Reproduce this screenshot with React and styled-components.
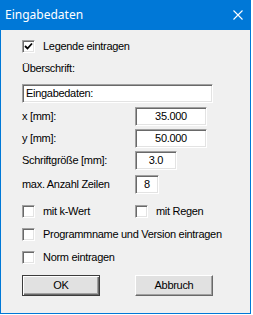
import React from 'react';
import styled, { createGlobalStyle } from 'styled-components';

const GlobalStyle = createGlobalStyle`
  html, body {
    margin: 0;
    padding: 0;
    background: #ffffff;
  }
  body {
    font-family: "Liberation Sans", Arial, sans-serif;
    font-size: 11px;
    letter-spacing: -0.3px;
    color: #000;
  }
`;

const Window = styled.div`
  width: 251px;
  height: 314px;
  box-sizing: border-box;
  border: 1px solid #0078d7;
  border-top: 0;
  background: #f0f0f0;
  display: flex;
  flex-direction: column;
`;

const TitleBar = styled.div`
  height: 30px;
  flex: none;
  background: #0078d7;
  display: flex;
  align-items: center;
  justify-content: space-between;
  padding: 0 7px 0 4px;
  color: #fff;
  font-family: "Noto Sans", "Open Sans", sans-serif;
  font-size: 12px;
  letter-spacing: 0;
`;

const Title = styled.span`
  margin-top: -2px;
`;

const Content = styled.div`
  display: flex;
  flex-direction: column;
  padding: 10px 0 0 21px;
`;

const Row = styled.div`
  display: flex;
  align-items: center;
  margin-top: ${(p) => p.$top || 0}px;
  height: ${(p) => p.$h || 13}px;
`;

const Label = styled.span`
  line-height: 13px;
  white-space: nowrap;
`;

const FieldLabel = styled(Label)`
  width: 113px;
  flex: none;
`;

const Sunken = styled.div`
  box-sizing: border-box;
  background: #fff;
  border-top: 1px solid #a0a0a0;
  border-left: 1px solid #a0a0a0;
  border-right: 1px solid #fff;
  border-bottom: 1px solid #fff;
  box-shadow: inset 1px 1px 0 #696969, inset -1px -1px 0 #e3e3e3;
`;

const Edit = styled(Sunken)`
  width: ${(p) => p.$w}px;
  height: 19px;
  display: flex;
  align-items: center;
  justify-content: ${(p) => (p.$left ? 'flex-start' : 'center')};
  padding: ${(p) => (p.$left ? '0 0 0 3px' : '0')};
  line-height: 13px;
  white-space: nowrap;
`;

const Box = styled(Sunken)`
  width: 13px;
  height: 13px;
  flex: none;
  display: flex;
  align-items: center;
  justify-content: center;
`;

const CheckText = styled(Label)`
  margin-left: 8px;
`;

const CheckItem = styled.div`
  display: flex;
  align-items: center;
  width: ${(p) => p.$w || 'auto'};
`;

const Buttons = styled.div`
  display: flex;
  gap: 35px;
  margin-top: 11px;
`;

const Button = styled.div`
  width: 78px;
  height: 21px;
  box-sizing: border-box;
  display: flex;
  align-items: center;
  justify-content: center;
  background: #e1e1e1;
  border: 1px solid ${(p) => (p.$default ? '#3c3c3c' : '#fff')};
  border-right-color: ${(p) => (p.$default ? '#3c3c3c' : '#696969')};
  border-bottom-color: ${(p) => (p.$default ? '#3c3c3c' : '#696969')};
  box-shadow: ${(p) =>
    p.$default
      ? 'inset 1px 1px 0 #fff, inset -1px -1px 0 #696969, inset -2px -2px 0 #a0a0a0'
      : 'inset -1px -1px 0 #a0a0a0'};
  line-height: 13px;
`;

function Check({ checked, children, w }) {
  return (
    <CheckItem $w={w}>
      <Box>
        {checked && (
          <svg width="9" height="9" viewBox="0 0 9 9">
            <path d="M1 4 L3.5 6.5 L8 1.5" fill="none" stroke="#000" strokeWidth="1.8" />
          </svg>
        )}
      </Box>
      <CheckText>{children}</CheckText>
    </CheckItem>
  );
}

export default function App() {
  return (
    <>
      <GlobalStyle />
      <Window>
        <TitleBar>
          <Title>Eingabedaten</Title>
          <svg width="10" height="10" viewBox="0 0 10 10">
            <path d="M0.5 0.5 L9.5 9.5 M9.5 0.5 L0.5 9.5" stroke="#fff" strokeWidth="1.1" />
          </svg>
        </TitleBar>
        <Content>
          <Row>
            <Check checked>Legende eintragen</Check>
          </Row>
          <Row $top={9}>
            <Label>Überschrift:</Label>
          </Row>
          <Row $top={9} $h={19}>
            <Edit $w={191} $left>Eingabedaten:</Edit>
          </Row>
          <Row $top={4} $h={19}>
            <FieldLabel>x [mm]:</FieldLabel>
            <Edit $w={72}>35.000</Edit>
          </Row>
          <Row $top={3} $h={19}>
            <FieldLabel>y [mm]:</FieldLabel>
            <Edit $w={72}>50.000</Edit>
          </Row>
          <Row $top={3} $h={19}>
            <FieldLabel>Schriftgröße [mm]:</FieldLabel>
            <Edit $w={42}>3.0</Edit>
          </Row>
          <Row $top={5} $h={19}>
            <FieldLabel>max. Anzahl Zeilen</FieldLabel>
            <Edit $w={24}>8</Edit>
          </Row>
          <Row $top={11}>
            <Check w="113px">mit k-Wert</Check>
            <Check>mit Regen</Check>
          </Row>
          <Row $top={10}>
            <Check>Programmname und Version eintragen</Check>
          </Row>
          <Row $top={10}>
            <Check>Norm eintragen</Check>
          </Row>
          <Buttons>
            <Button $default>OK</Button>
            <Button>Abbruch</Button>
          </Buttons>
        </Content>
      </Window>
    </>
  );
}
